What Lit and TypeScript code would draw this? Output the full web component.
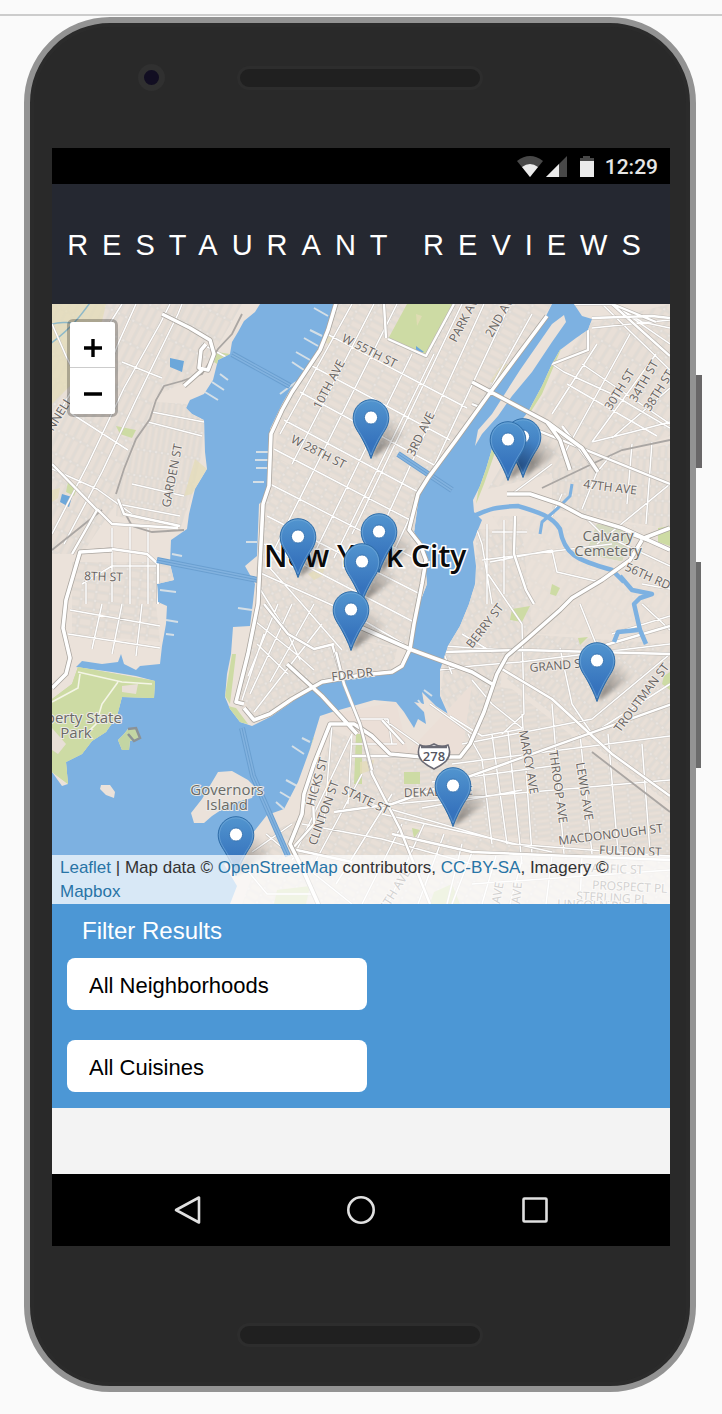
import { LitElement, html, css, svg } from "lit";
import { customElement } from "lit/decorators.js";

const MAP_W = 618;
const MAP_H = 600;

const lands = {
  jersey:
    "M0 0H208L203 8 192 17 186 28 180 38 178 50 166 56 161 76 152 90 138 96 134 104 140 110 152 116 153 148 155 165 143 185 137 210 135 225 119 236 118 260 122 276 105 280 106 298 115 302 114 320 110 342 108 360 88 362 84 366 72 360 69 350 66 358 50 360 30 357 24 363 60 368 84 372 103 377 102 394 70 393 65 412 54 428 40 437 30 450 14 458 16 480 10 482 0 468Z",
  manhattan:
    "M285 0H500L494 12 462 55 440 85 430 98 420 116 404 136 390 157 375 174 367 190 364 214 362 228 370 242 373 258 375 280 368 298 362 320 358 345 350 362 340 370 310 373 272 379 256 386 240 398 220 412 200 422 188 418 178 405 160 393 158 370 160 340 162 322 180 322 198 322 201 298 203 280 193 262 205 252 207 200 212 196 216 180 218 145 218 125 230 100 238 86 252 68 268 45 276 25Z",
  brooklyn:
    "M522 0H618V600H178L185 582 172 560 190 555 200 530 215 511 232 505 246 478 258 445 268 412 280 408 308 400 322 396 344 398 352 408 362 424 366 415 374 420 372 408 362 398 372 400 370 388 384 402 396 410 388 392 388 366 396 342 408 322 417 300 423 280 424 262 421 238 430 216 422 208 421 196 428 182 434 165 440 145 460 128 476 108 490 82 500 60 508 46 524 34 536 26 540 15 530 12Z",
  roosevelt: "M512 11L514 18 500 38 480 68 460 92 446 112 430 130 423 142 426 126 440 110 468 66 500 20Z",
  governors: "M166 468L180 467 196 476 204 484 200 494 178 500 160 512 152 519 142 519 139 509 150 495Z",
  ellis: "M66 436L72 430 76 425 84 424 88 434 78 437 77 446 70 446Z",
  liberty: "M49 481L58 481 63 488 62 494 54 491 48 485Z",
};
lands.manhattan = lands.manhattan.replace("178 405 160 393 158 370 160 340 162 322 180 322", "178 405 173 393 175 370 179 350 181 323");

const parks = [
  "M355 0H401L375 52 336 35Z",
  "M545 220L580 228 570 257 534 250Z",
  "M606 224L618 222V242L606 238Z",
  "M26 363L103 377 102 394 70 393 65 412 54 428 40 437 30 450 14 458 16 480 0 468V395L20 380Z",
  "M165 48L178 50 176 58 168 62 162 58Z",
  "M64 122L84 126 80 134 68 130Z",
  "M16 178L26 182 22 192 14 188Z",
  "M176 402L184 404 196 420 184 418Z",
  "M256 430L262 434 244 480 238 476Z",
  "M352 468H368V480H352Z",
  "M460 305L478 302 470 318 458 316Z",
  "M500 45L512 38 490 90 476 112 484 86Z",
  "M436 142L446 140 432 180 424 200 428 176Z",
  "M526 334L536 333 528 341Z",
  "M180 350L184 350 178 400 173 392Z",
  "M225 586L258 582 254 600H222Z",
  "M360 524L368 526 362 534Z",
  "M304 430L310 430 310 480 302 480Z",
  "M612 372L618 368V386L610 380Z",
  "M220 50L214 60 218 64Z",
  "M500 280L508 284 504 292 498 290Z",
  "M382 588L400 580 408 600H378Z",
];

const sands = [
  "M0 0H54L40 60 0 100Z",
  "M143 155L155 165 140 190 132 192Z",
  "M364 10L370 12 365 22Z",
  "M256 270L274 260 270 272 262 276Z",
  "M308 458L322 456 320 466 308 470Z",
  "M0 186L8 184 6 194 0 198Z",
  "M450 60L456 60 444 80 438 78Z",
  "M274 30L282 34 276 40 272 36Z",
];

const minorRoads = [
  "M0 230L36 160 72 84 108 20 118 0", "M12 240L50 168 84 96 126 10 130 0", "M0 120L30 70 46 38 70 0",
  "M0 20L14 52 30 84", "M84 0L66 40 46 90", "M0 165L45 185 80 210", "M20 110L76 146", "M70 58L110 74",
  "M150 40L176 54", "M100 108L152 118", "M96 118L150 132", "M80 180L132 192", "M66 200L128 212",
  "M30 280L60 262 104 262", "M34 268V300M60 224V298M78 218V300M96 222V300", "M16 330L108 344", "M18 306L108 322",
  "M50 300L40 345M70 300L60 350M90 300L84 352", "M26 370L22 385 0 398", "M66 378L50 400 44 420 34 430",
  "M300 0L228 130", "M322 0L240 160", "M345 0L215 260", "M360 50L262 250", "M382 50L282 254",
  "M410 0L300 230", "M432 0L318 250", "M458 0L336 260", "M480 10L366 215",
  "M275 30L415 104", "M260 62L398 136", "M248 88L384 162", "M232 116L370 190", "M222 145L362 218", "M218 180L366 256",
  "M215 212L372 292", "M212 240L362 318", "M206 268L300 310 352 340", "M208 285L236 330 248 356", "M216 262L250 300 290 346",
  "M226 300L196 372", "M240 300L198 390", "M204 318L244 350 262 366", "M262 300L218 378", "M270 320L202 408", "M205 340L236 370", "M212 330L190 396",
  "M550 0L618 66", "M530 60L618 120", "M515 80L605 132", "M545 40L500 110", "M578 30L512 150", "M604 50L540 138", "M618 84L560 134",
  "M540 24L618 16", "M500 60L512 68 560 90 618 124", "M560 0L590 18 618 24", "M420 212L430 240 440 300", "M435 220V300", "M452 216L452 290",
  "M430 256L560 240", "M438 258L500 246", "M440 228L475 228", "M500 246L505 268 548 278", "M540 138L580 128 618 118",
  "M560 150L545 168 530 205", "M580 140L575 200", "M600 138L594 220", "M545 240L618 180", "M530 210L550 230 618 262",
  "M590 280L618 285", "M590 300L618 326", "M560 0L618 40", "M500 160L460 190", "M510 190L500 212",
  "M388 366L420 362 468 358 618 340", "M410 330L440 348 470 345", "M392 342L470 347", "M470 320L472 410 450 430",
  "M436 270L470 320", "M400 370L392 350", "M416 430L430 455 440 540", "M440 430L455 540", "M456 428L470 560", "M398 412L430 432 470 425",
  "M400 460L618 432", "M380 478L500 462", "M370 504L470 486", "M340 500L618 476", "M508 344L520 400 540 430", "M528 300L546 345",
  "M410 440L540 415 618 350", "M540 430L618 380", "M560 330L618 312", "M320 500L460 540 618 552", "M330 510L500 548",
  "M280 420L272 520", "M300 430L296 500", "M250 520L330 535 420 560", "M240 556L300 430", "M262 560L310 470", "M284 580L340 490",
  "M310 600L350 520", "M336 600L372 520", "M366 600L392 530", "M395 600L410 540", "M214 530L250 560 300 600", "M190 560L215 590 260 590",
  "M200 548L240 520", "M420 548L400 600", "M444 552L430 600", "M470 556L458 600", "M500 552L494 600", "M530 552L528 600", "M420 580L618 566",
  "M470 410L480 550M500 400L512 550M528 430L540 550M556 430L566 548M590 440L598 548", "M332 416L380 450", "M300 440L345 440",
  "M308 415L336 415 340 440", "M378 400L420 430", "M420 376L440 400 470 424",
];

const midRoads = [
  "M28 248L60 245 95 250 106 260 106 300", "M45 205L60 220 126 224", "M0 160L45 206 20 250", "M66 195L72 210 128 222",
  "M463 212L462 250 474 286 482 300", "M420 100L618 180", "M545 168L510 122", "M336 35L374 52 402 0", "M332 0L334 34",
  "M540 14L600 12 618 14", "M536 26L536 46 500 60 480 62", "M280 340L292 380 308 420 320 470 348 525 378 600",
  "M282 340L262 345 236 330 212 300", "M450 365L500 395 560 450 618 492", "M300 452L410 452", "M390 348L470 346 618 350",
  "M540 345L618 322", "M340 530L420 548 618 556", "M330 416L352 440", "M520 0L560 0 618 52", "M260 465L262 520 240 545 300 558",
  "M560 0L604 18", "M282 508L340 500 620 400",
];

const majorRoads = [
  "M285 -4L276 26 268 46 240 88 230 106 219 130 217 182 211 200 206 300 196 350 184 398 192 400",
  "M495 12L463 55 440 86 404 136 376 174 366 190 357 226 368 240 374 256 370 280 362 320 358 345 350 362 340 368 310 371 270 378 240 395 218 410 202 416 192 404",
  "M110 10L138 24 158 36 162 50 156 66 147 64 149 46 154 40M150 66L132 82",
  "M60 246L28 248 14 296 11 324 18 354 14 370 0 384",
  "M235 360L270 392 305 430", "M308 323L360 346 420 368 440 380",
  "M420 78L495 118 508 136 518 166", "M495 118L530 144 546 168",
  "M455 190L478 190 508 200 530 212 570 224 592 234 618 224", "M618 246L596 236 580 230",
  "M590 236L578 256 550 276 520 294 508 306 475 335 455 352 445 370 432 408 418 440 408 453 370 453 338 450 320 432 302 420 278 420 262 460 252 490 250 510 238 540 252 568 268 604",
];

const rails = [
  "M190 10L180 30 166 45 150 70 130 77 112 82 104 96 98 115 84 135 72 165 64 190",
  "M66 196L80 222 100 228 132 226", "M490 184L540 160 570 146 618 136", "M0 246L50 206",
  "M540 448L618 508",
];

const tunnels = ["M180 50L238 82", "M105 256L206 276", "M190 424L201 472 236 552", "M346 150L400 186"];

const piers = [
  "M276 12L262 4M270 32L258 26M266 42L252 34M258 56L244 48M252 66L240 58M244 78L228 90",
  "M216 148H204M216 156H203M216 164H204M212 178H201M205 238H194",
  "M153 88L166 96M160 78L172 86M168 70L176 76M120 250L130 252M108 286L124 288M114 316L126 318M114 330L122 331",
  "M200 306L186 304M232 505L224 498M238 494L228 488M245 482L234 476M252 450L240 442M258 438L250 434M372 386L380 392M366 396L376 410",
];

type Label = { t: string; x: number; y: number; r?: number; place?: boolean };
const labels: Label[] = [
  { t: "W 55TH ST", x: 289, y: 37, r: 27 },
  { t: "10TH AVE", x: 268, y: 106, r: -62 },
  { t: "W 28TH ST", x: 238, y: 138, r: 27 },
  { t: "GARDEN ST", x: 118, y: 204, r: -79 },
  { t: "CONNELL", x: -8, y: 142, r: -58 },
  { t: "8TH ST", x: 32, y: 276, r: 2 },
  { t: "PARK AVE", x: 404, y: 39, r: -62 },
  { t: "2ND AVE", x: 440, y: 34, r: -60 },
  { t: "3RD AVE", x: 362, y: 153, r: -64 },
  { t: "30TH ST", x: 559, y: 107, r: -58 },
  { t: "34TH ST", x: 584, y: 99, r: -60 },
  { t: "38TH ST", x: 598, y: 108, r: -58 },
  { t: "47TH AVE", x: 531, y: 184, r: 7 },
  { t: "56TH RD", x: 572, y: 266, r: 24 },
  { t: "FDR DR", x: 280, y: 377, r: -7 },
  { t: "BERRY ST", x: 420, y: 345, r: -52 },
  { t: "GRAND ST", x: 478, y: 368, r: -5 },
  { t: "TROUTMAN ST", x: 568, y: 429, r: -53 },
  { t: "HICKS ST", x: 262, y: 503, r: -74 },
  { t: "CLINTON ST", x: 264, y: 542, r: -70 },
  { t: "STATE ST", x: 289, y: 489, r: 25 },
  { t: "DEKALB AVE", x: 352, y: 493, r: -2 },
  { t: "MARCY AVE", x: 467, y: 427, r: 80 },
  { t: "THROOP AVE", x: 497, y: 447, r: 82 },
  { t: "LEWIS AVE", x: 524, y: 459, r: 81 },
  { t: "MACDONOUGH ST", x: 507, y: 541, r: -7 },
  { t: "FULTON ST", x: 547, y: 550, r: 2 },
  { t: "PACIFIC ST", x: 532, y: 568, r: 2 },
  { t: "PROSPECT PL", x: 540, y: 585, r: 3 },
  { t: "STERLING PL", x: 524, y: 596, r: 3 },
  { t: "LINCOLN PL", x: 505, y: 604, r: 2 },
  { t: "6TH AVE", x: 334, y: 608, r: -58 },
  { t: "AVE", x: 448, y: 600, r: -80 },
  { t: "AVE", x: 468, y: 600, r: -85 },
  { t: "Calvary", x: 556, y: 237, place: true },
  { t: "Cemetery", x: 556, y: 252, place: true },
  { t: "Liberty State", x: 26, y: 419, place: true },
  { t: "Park", x: 24, y: 434, place: true },
  { t: "Governors", x: 175, y: 491, place: true },
  { t: "Island", x: 175, y: 506, place: true },
];

const pins = [
  { name: "Mission Chinese Food", x: 319, y: 155 },
  { name: "Emily", x: 471, y: 174 },
  { name: "Kang Ho Dong Baekjeong", x: 456, y: 177 },
  { name: "Katz's Delicatessen", x: 327, y: 269 },
  { name: "Roberta's Pizza", x: 246, y: 274 },
  { name: "Hometown BBQ", x: 310, y: 299 },
  { name: "Superiority Burger", x: 299, y: 347 },
  { name: "The Dutch", x: 545, y: 398 },
  { name: "Mu Ramen", x: 401, y: 523 },
  { name: "Casa Enrique", x: 184, y: 572 },
];

const grid = (id: string, w: number, h: number, angle: number) => svg`
  <pattern id=${id} width=${w} height=${h} patternUnits="userSpaceOnUse" patternTransform="rotate(${angle})">
    <rect width=${w} height=${h} fill="#f4f0ec" />
    <rect x="0.8" y="0.8" width=${w - 1.6} height=${h - 1.6} fill="#e8dfd7" stroke="#d3cdc7" stroke-width="0.7" />
  </pattern>`;

@customElement("city-map")
class CityMap extends LitElement {
  static styles = css`
    :host { display: block; position: relative; aspect-ratio: 618 / 600; overflow: hidden; background: #7db1e1; }
    .tiles { display: block; width: 100%; height: 100%; }
    .street { font: 500 12px "Open Sans", sans-serif; fill: #666260; stroke: #f0ebe6; stroke-width: 2; paint-order: stroke; }
    .place { font: 500 15px "Open Sans", sans-serif; fill: #6a6a66; stroke: #eceae6; stroke-width: 2; paint-order: stroke; text-anchor: middle; }
    .city { font: 600 30px "Open Sans", sans-serif; fill: #0b0b0b; stroke: #fff; stroke-width: 3; paint-order: stroke; }
    .shield { font: 600 13px "Open Sans", sans-serif; fill: #55555f; text-anchor: middle; }
    .zoom { position: absolute; left: 15px; top: 15px; display: flex; flex-direction: column; border: 3px solid rgba(0, 0, 0, 0.25); border-radius: 6px; background-clip: padding-box; overflow: hidden; }
    .zoom button { display: grid; place-items: center; width: 45px; height: 46px; padding: 4px 0 0; border: 0; background: #fff; }
    .zoom button:first-child { border-bottom: 1px solid #ccc; }
    .pin { position: absolute; width: 37px; height: 60px; padding: 0; border: 0; background: none; transform: translate(-50%, -100%); }
    .pin svg { display: block; overflow: visible; }
    .credit { position: absolute; left: 0; right: 0; bottom: 0; padding: 1px 8px 0; background: rgba(255, 255, 255, 0.7); color: #333; font: 17px/24px "Liberation Sans", Arial, sans-serif; }
    .credit a { color: #2874a6; text-decoration: none; }
  `;

  private roads(paths: string[], width: number, casing: string, edge: number) {
    const d = paths.join("");
    return svg`
      <path d=${d} fill="none" stroke=${casing} stroke-width=${width + edge} stroke-linejoin="round" />
      <path d=${d} fill="none" stroke="#fff" stroke-width=${width} stroke-linejoin="round" />`;
  }

  render() {
    return html`
      <svg class="tiles" viewBox="0 0 ${MAP_W} ${MAP_H}" role="img" aria-label="Map of New York City">
        <defs>
          ${grid("g-midtown", 17, 8, 28)} ${grid("g-village", 11, 8, 30)} ${grid("g-downtown", 8, 9, -22)}
          ${grid("g-hoboken", 6, 26, 9)} ${grid("g-heights", 8, 22, 27)} ${grid("g-jersey", 14, 9, 8)}
          ${grid("g-queens", 9, 20, 32)} ${grid("g-sunny", 7, 14, 4)} ${grid("g-bedstuy", 16, 6, -7)}
          ${grid("g-bushwick", 14, 7, -52)} ${grid("g-burg", 8, 12, -30)} ${grid("g-slope", 14, 8, 28)}
          <clipPath id="land"><path d="${lands.jersey}${lands.manhattan}${lands.brooklyn}" /></clipPath>
        </defs>
        <rect width="618" height="600" fill="#7db1e1" />
        <path d=${piers.join("")} fill="none" stroke="#d5dfe6" stroke-width="2" />
        <path d=${Object.values(lands).join("")} fill="#ebe2da" />
        <g clip-path="url(#land)">
          <path d="M0 0H190L150 70 104 92 64 200 30 250H0Z" fill="url(#g-heights)" />
          <path d="M104 98L134 100 153 118 150 148 140 190 128 226 64 212 66 180Z" fill="url(#g-hoboken)" />
          <path d="M20 258H120L122 276 104 300 108 338 20 330Z" fill="url(#g-jersey)" />
          <path d="M285 0H500L375 174 366 230 215 180 232 100Z" fill="url(#g-midtown)" />
          <path d="M216 150L366 226 376 280 358 345 300 335 205 262Z" fill="url(#g-village)" />
          <path d="M204 262L300 335 345 345 340 370 256 384 200 420 186 400 205 300Z" fill="url(#g-downtown)" />
          <path d="M535 20L618 0V132L520 165 436 185 480 110Z" fill="url(#g-queens)" />
          <path d="M500 165L618 140V225L500 205Z" fill="url(#g-sunny)" />
          <path d="M618 225V330H480L470 260 440 212 500 212Z" fill="url(#g-queens)" opacity="0.45" />
          <path d="M424 225H470L480 320 450 370 440 450 410 440 388 390 396 340 424 280Z" fill="url(#g-burg)" />
          <path d="M470 330L618 340V500L455 375Z" fill="url(#g-bushwick)" />
          <path d="M430 380L460 385 618 508V552L345 520 340 455H410Z" fill="url(#g-bedstuy)" />
          <path d="M280 425L340 455 350 525 620 556V600H190L215 530 258 510Z" fill="url(#g-slope)" />
          <path d="M270 412L344 398 356 448 420 380 410 450 340 452Z" fill="#ebdfd7" />
          <path d=${parks.join("")} fill="#cddba4" />
          <path d=${sands.join("")} fill="#e4dcb8" opacity="0.75" />
          <path d="M545 220L580 228 570 257 534 250Z" fill="#d5dac0" />
          <path d="M-2 40C20 24 30 10 40 -4M0 20C20 14 40 28 56 20" fill="none" stroke="#8fb9c8" stroke-width="1.5" />
          <path d="M118 54L132 57 130 68 118 63ZM10 190L20 193 17 203 8 198ZM364 42L372 48 364 50Z" fill="#6ca7da" />
          ${this.roads(minorRoads, 1.5, "#c8c3be", 1)}
          <path d=${rails.join("")} fill="none" stroke="#aaa6a3" stroke-width="1.8" />
          ${this.roads(midRoads, 2.4, "#bdb8b3", 1.3)}
        </g>
        <path d="M520 180L518 192 506 204 490 218 488 230" fill="none" stroke="#7db1e1" stroke-width="3" stroke-linejoin="round" />
        <path d="M422 212C436 206 440 203 466 202C486 208 500 212 508 225C512 250 524 256 560 266L572 278" fill="none" stroke="#7db1e1" stroke-width="4.5" />
        <path d="M568 272L580 286 600 290 588 294 582 300 588 326 594 340M586 326L566 328 562 338" fill="none" stroke="#7db1e1" stroke-width="4.5" stroke-linejoin="round" />
        <path d=${parks[3]} fill="#cddba4" />
        <path d="M70 382L86 380 84 390 70 388ZM0 424L14 440 6 450 0 446Z" fill="#e8dfd6" />
        <path d="M26 368L70 378 100 380M66 378L50 400 44 420 34 430M28 370L26 384 0 398" fill="none" stroke="#f4f5e6" stroke-width="1.6" />
        <path d=${lands.ellis} fill="#c3d5a3" />
        <path d="M76 425L84 424 88 434 82 437 76 430" fill="none" stroke="#8b9296" stroke-width="2.5" />
        <path d=${tunnels.join("")} fill="none" stroke="#6a9fd0" stroke-width="6" />
        <path d=${tunnels.join("")} fill="none" stroke="#82b2df" stroke-width="4" />
        <path d=${tunnels.join("")} fill="none" stroke="#6a9fd0" stroke-width="1" />
        ${this.roads([majorRoads.join("")], 3.6, "#aaa59f", 1.6)}
        ${this.roads(["M284 348L292 380 308 420 320 466"], 2.6, "#b5b1ad", 1.4)}
        ${labels.map(
          (l) => svg`<text class=${l.place ? "place" : "street"} transform="translate(${l.x} ${l.y}) rotate(${l.r ?? 0})">${l.t}</text>`
        )}
        <path d="M368 441Q375 444 382 440 389 444 396 441 400 450 394 457 390 461 382 465 374 461 370 457 364 450 368 441Z" fill="#fff" stroke="#6a6a74" stroke-width="1.6" />
        <path d="M369 443H395" stroke="#6a6a74" stroke-width="2.5" />
        <text class="shield" x="382" y="457">278</text>
        <text class="city" x="212" y="263">New York City</text>
      </svg>
      ${pins.map(
        (p) => html`<button class="pin" aria-label=${p.name} style="left:${(p.x / MAP_W) * 100}%;top:${(p.y / MAP_H) * 100}%">
          <svg width="37" height="60" viewBox="0 0 37 60" aria-hidden="true">
            <defs>
              <linearGradient id="body" x1="0" y1="0" x2="0" y2="1"><stop offset="0" stop-color="#5295cf" /><stop offset="0.75" stop-color="#3673bd" /></linearGradient>
              <linearGradient id="shade" x1="0" y1="1" x2="1" y2="0"><stop offset="0" stop-color="#000" stop-opacity="0.5" /><stop offset="0.8" stop-color="#000" stop-opacity="0" /></linearGradient>
              <filter id="soft" x="-30%" y="-30%" width="160%" height="160%"><feGaussianBlur stdDeviation="2" /></filter>
            </defs>
            <path d="M19 59L30 30Q40 14 54 20 62 28 48 39Z" fill="url(#shade)" filter="url(#soft)" />
            <path d="M18.500 59.500C16 52 12 44 7.500 36 3 29 .7 25 .7 18.700A17.800 18 0 0 1 36.300 18.700C36.300 25 34 29 29.500 36 25 44 21 52 18.500 59.500Z" fill="url(#body)" stroke="#2f6da8" />
            <path d="M18.500 56C16 49 12.500 42 8.500 35.500 4 28.500 1.900 25 1.900 18.700A16.600 16.800 0 0 1 35.100 18.700C35.100 25 33 28.500 28.500 35.500 24.500 42 21 49 18.500 56Z" fill="none" stroke="#7fb3de" stroke-opacity="0.5" />
            <circle cx="18.500" cy="18.500" r="6.600" fill="#fff" stroke="#3a76b3" />
          </svg>
        </button>`
      )}
      <div class="zoom">
        <button aria-label="Zoom in"><svg width="20" height="20" viewBox="0 0 20 20"><path d="M1 11H19M10 2V20" stroke="#000" stroke-width="3.4" /></svg></button>
        <button aria-label="Zoom out"><svg width="20" height="20" viewBox="0 0 20 20"><path d="M1 11H19" stroke="#000" stroke-width="3.6" /></svg></button>
      </div>
      <div class="credit"><a href="#leaflet">Leaflet</a> | Map data © <a href="#osm">OpenStreetMap</a> contributors, <a href="#cc">CC-BY-SA</a>, Imagery © <a href="#mapbox">Mapbox</a></div>
    `;
  }
}

@customElement("app-root")
class AppRoot extends LitElement {
  static styles = css`
    :host { display: block; min-height: 100vh; box-sizing: border-box; padding: 14px 0 22px; background: #fafafa; font-family: "Liberation Sans", Arial, sans-serif; }
    .rule { height: 2px; margin-bottom: 1px; background: #ccc; }
    .stage { display: flex; padding-left: 24px; }
    .phone { flex: 1; min-width: 0; border: 6px solid #939393; border-radius: 86px; background: #292929; box-shadow: inset 0 0 0 4px #2b2b2b; }
    .side { display: flex; flex-direction: column; gap: 94px; width: 26px; padding-top: 358px; }
    .power { width: 6px; height: 93px; background: #696768; }
    .volume { width: 5px; height: 206px; background: #6b6b6b; }
    .brow { display: grid; grid-template-columns: 1fr 246px 1fr; align-items: center; padding: 41px 0 57px; }
    .camera { width: 15px; height: 15px; margin-left: 108px; border: 6px solid #303030; border-radius: 50%; background: #120e22; }
    .slot { box-sizing: border-box; height: 24px; border: 3px solid #2d2d2d; border-radius: 12px; background: #202020; }
    .chin { display: grid; grid-template-columns: 246px; justify-content: center; padding: 77px 0 39px; }
    .screen { margin: 0 20px 0 22px; background: #f3f3f3; }
    .status { display: flex; justify-content: flex-end; align-items: center; height: 36px; padding: 2px 12px 0 0; box-sizing: border-box; background: #000; color: #e6e6e6; font: 500 21px/34px Roboto, sans-serif; }
    .status svg { margin-right: 10px; }
    .title { display: flex; align-items: center; justify-content: center; height: 120px; padding-top: 2px; box-sizing: border-box; background: #252831; }
    h1 { margin: 0; color: #fff; font-size: 29px; font-weight: 400; line-height: 36px; letter-spacing: 14px; white-space: nowrap; }
    .filters { display: flex; flex-direction: column; align-items: flex-start; padding: 12px 15px 16px; background: #4c97d5; }
    h2 { margin: 0 0 12px; padding-left: 15px; color: #fff; font-size: 24px; font-weight: 400; line-height: 30px; }
    select { appearance: none; width: 300px; max-width: 100%; height: 52px; padding: 2px 22px 0; border: 0; border-radius: 8px; background: #fff; color: #000; font: 22px "Liberation Sans", Arial, sans-serif; }
    select + select { margin-top: 30px; }
    .rest { height: 66px; }
    .nav { display: grid; grid-template-columns: repeat(3, 174px); justify-content: center; height: 72px; background: #000; }
    .nav button { display: grid; place-items: center; padding: 0; border: 0; background: none; }
    .nav svg { fill: none; stroke: #e0e0e0; stroke-width: 2.6; stroke-linejoin: round; }
  `;

  render() {
    return html`
      <div class="rule"></div>
      <div class="stage">
        <div class="phone">
          <div class="brow"><div class="camera"></div><div class="slot"></div></div>
          <main class="screen">
            <div class="status">
              <svg width="78" height="24" viewBox="0 0 78 24" aria-hidden="true">
                <path d="M0 6Q13-4 26 6L13 22Z" fill="#484848" />
                <path d="M5 12Q13 6 21 12L13 22Z" fill="#ebebeb" />
                <path d="M50 1V22H29Z" fill="#484848" />
                <path d="M42 9V22H29Z" fill="#ebebeb" />
                <path d="M66 1H73V3H77V7H63V3H66Z" fill="#484848" />
                <path d="M63 6H77V22H63Z" fill="#ebebeb" />
              </svg>
              <span>12:29</span>
            </div>
            <header class="title"><h1>RESTAURANT REVIEWS</h1></header>
            <city-map></city-map>
            <section class="filters">
              <h2>Filter Results</h2>
              <select aria-label="Neighborhood"><option>All Neighborhoods</option></select>
              <select aria-label="Cuisine"><option>All Cuisines</option></select>
            </section>
            <div class="rest"></div>
            <nav class="nav">
              <button aria-label="Back"><svg width="30" height="30" viewBox="0 0 30 30"><path d="M27 2.500V27.500L4 15Z" /></svg></button>
              <button aria-label="Home"><svg width="30" height="30" viewBox="0 0 30 30"><circle cx="15" cy="15" r="12.700" /></svg></button>
              <button aria-label="Overview"><svg width="30" height="30" viewBox="0 0 30 30"><rect x="3.500" y="3.500" width="23" height="23" rx="1" /></svg></button>
            </nav>
          </main>
          <div class="chin"><div class="slot"></div></div>
        </div>
        <div class="side"><div class="power"></div><div class="volume"></div></div>
      </div>
    `;
  }
}
